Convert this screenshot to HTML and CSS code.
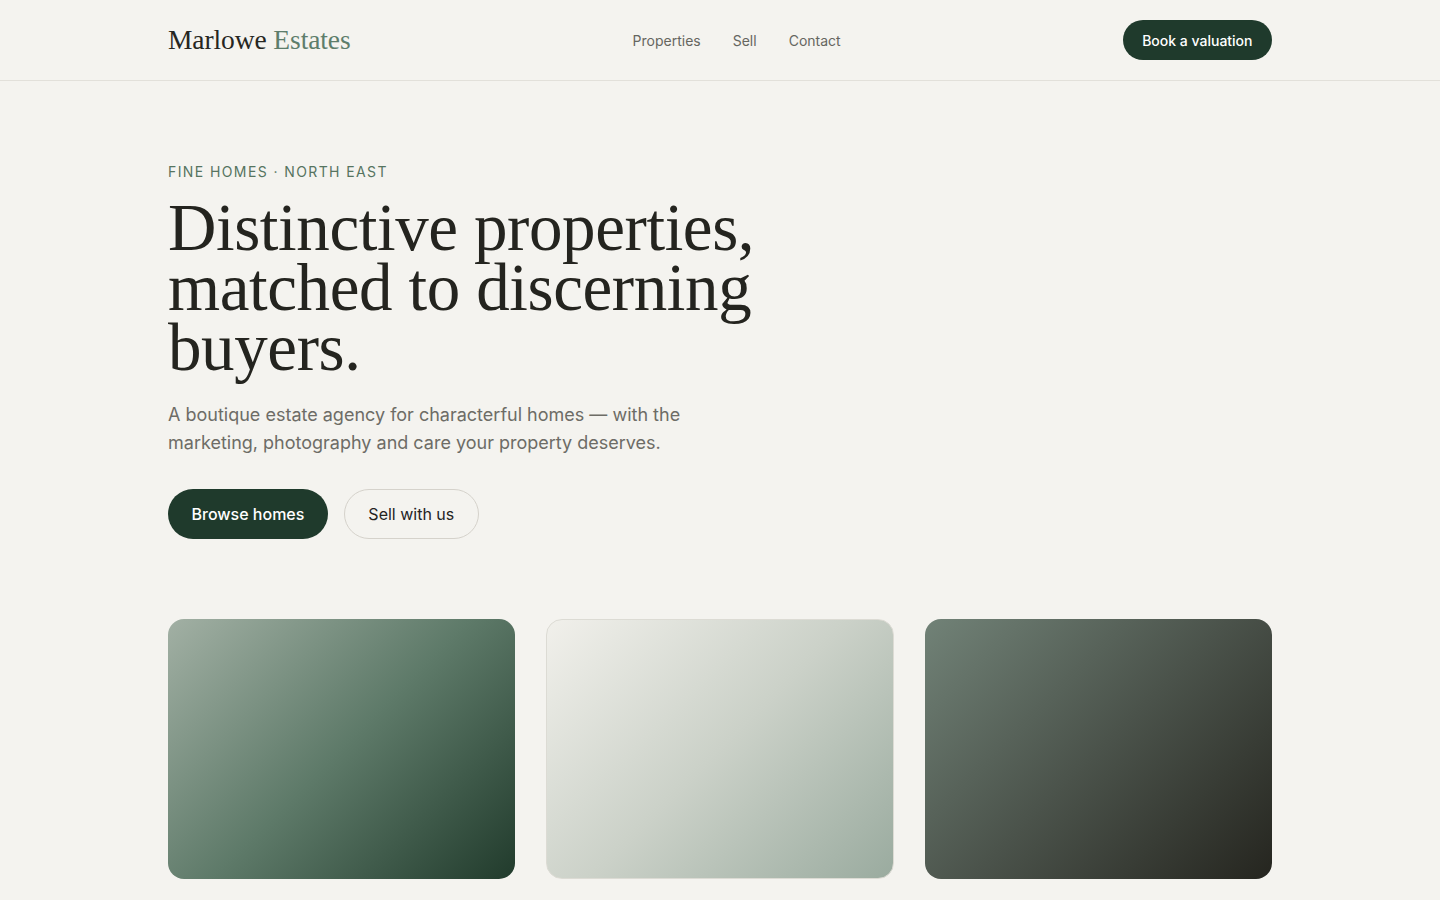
FILE: index.html
```html
<!DOCTYPE html>
<html lang="en">
<head>
    <meta charset="UTF-8">
    <meta name="viewport" content="width=device-width, initial-scale=1.0">
    <title>Marlowe Estates</title>
    <link rel="stylesheet" href="styles.css">
</head>
<body>

<header class="site-header">
    <div class="wrap header-inner">
        <a class="logo" href="#">Marlowe <span>Estates</span></a>
        <nav class="nav">
            <a href="#">Properties</a>
            <a href="#">Sell</a>
            <a href="#">Contact</a>
        </nav>
        <a class="btn btn-dark btn-sm" href="#">Book a valuation</a>
    </div>
</header>

<main>
    <section class="hero wrap">
        <p class="eyebrow">Fine homes · North East</p>
        <h1>Distinctive properties, matched to discerning buyers.</h1>
        <p class="lead">A boutique estate agency for characterful homes — with the marketing, photography and care your property deserves.</p>
        <div class="actions">
            <a class="btn btn-dark" href="#">Browse homes</a>
            <a class="btn btn-outline" href="#">Sell with us</a>
        </div>
    </section>

    <section class="cards wrap">
        <div class="card card-sage"></div>
        <div class="card card-mist"></div>
        <div class="card card-slate"></div>
    </section>
</main>

</body>
</html>
```

FILE: styles.css
```css
* { margin: 0; padding: 0; box-sizing: border-box; }
body { background: #f4f3ef; color: #24241f; font-family: Inter, "Noto Sans", sans-serif; }
a { text-decoration: none; color: inherit; }
.wrap { width: 1104px; margin: 0 auto; }

/* Header */
.site-header { height: 81px; border-bottom: 1px solid #e2e0da; }
.header-inner { height: 80px; display: flex; align-items: center; justify-content: space-between; }
.logo { font-family: "Liberation Serif", "DejaVu Serif", serif; font-size: 27.5px; color: #262622; letter-spacing: -0.1px; }
.logo span { color: #5d7d6b; }
.nav { display: flex; gap: 32px; font-size: 14px; color: #66665f; }

/* Buttons */
.btn { display: inline-flex; align-items: center; justify-content: center; border-radius: 999px; font-weight: 500; }
.btn-dark { background: #1f3a2c; color: #fff; }
.btn-sm { height: 40px; padding: 0 19.5px; font-size: 14px; }
.actions { display: flex; gap: 16px; margin-top: 32px; }
.actions .btn { height: 50px; padding: 0 23.5px; font-size: 16px; }
.btn-outline { border: 1px solid #d5d2cb; color: #24241f; font-weight: 400; padding: 0 24px; }

/* Hero */
.hero { padding-top: 82px; }
.eyebrow { font-size: 14px; letter-spacing: 0.1em; text-transform: uppercase; color: #56745f; line-height: 18px; }
h1 { margin-top: 16px; width: 660px; font-family: "Liberation Serif", "DejaVu Serif", serif; font-weight: 400; font-size: 67px; line-height: 60px; letter-spacing: -0.4px; color: #24241f; }
.lead { margin-top: 24px; width: 560px; font-size: 18px; line-height: 28px; color: #6d6c66; }

/* Listing cards */
.cards { display: grid; grid-template-columns: repeat(3, 1fr); gap: 31px; margin-top: 80px; }
.card { height: 260px; border-radius: 16px; }
.card-sage { background: linear-gradient(135deg, #a2b0a4 0%, #5e7a69 50%, #213b2c 100%); }
.card-mist { background: linear-gradient(135deg, #f1f0eb 0%, #cbd1c8 50%, #9aab9f 100%); border: 1px solid #dcdbd4; }
.card-slate { background: linear-gradient(135deg, #718277 0%, #4b534b 50%, #25251f 100%); }
```
